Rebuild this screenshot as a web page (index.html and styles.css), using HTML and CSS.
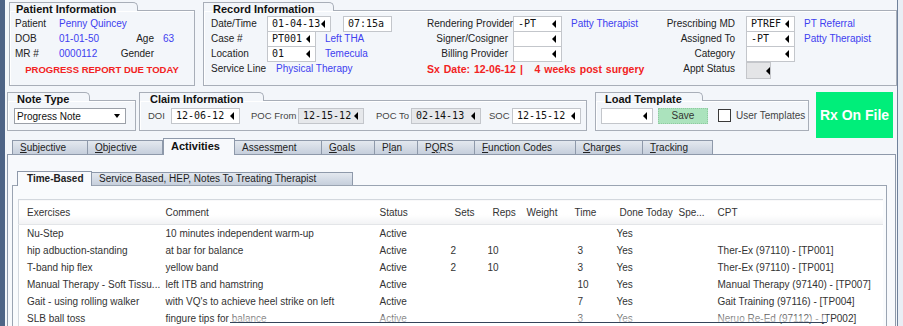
FILE: index.html
```html
<!DOCTYPE html>
<html lang="en">
<head>
  <meta charset="UTF-8" />
  <meta name="viewport" content="width=device-width, initial-scale=1.0"/>
  <title>Daily Note - Activities</title>
  <link rel="stylesheet" href="styles.css">
</head>
<body>
  <div class="window">
    <div class="edge-left"></div>
    <div class="main">

      <div class="row-top">
        <section class="group patient">
          <div class="group-tab">Patient Information</div>
          <div class="group-body patient-body">
            <span>Patient</span><span class="link wide">Penny Quincey</span>
            <span>DOB</span><span class="link">01-01-50</span><span class="rlbl">Age</span><span class="link val">63</span>
            <span>MR #</span><span class="link">0000112</span><span class="rlbl">Gender</span><span class="val"></span>
            <div class="alert">PROGRESS REPORT DUE TODAY</div>
          </div>
        </section>

        <section class="group record">
          <div class="group-tab">Record Information</div>
          <div class="group-body record-body">
            <div class="rec-col rec-left">
              <div class="rec-row">
                <span class="lbl">Date/Time</span>
                <span class="field w64">01-04-13<i class="tri"></i></span>
                <span class="field w49 time">07:15a</span>
              </div>
              <div class="rec-row">
                <span class="lbl">Case #</span>
                <span class="field w49">PT001<i class="tri"></i></span>
                <span class="link">Left THA</span>
              </div>
              <div class="rec-row">
                <span class="lbl">Location</span>
                <span class="field w49">01<i class="tri"></i></span>
                <span class="link">Temecula</span>
              </div>
              <div class="rec-row">
                <span class="lbl">Service Line</span>
                <span class="link">Physical Therapy</span>
              </div>
            </div>

            <div class="rec-col rec-mid">
              <div class="rec-row">
                <span class="lbl">Rendering Provider</span>
                <span class="field w49">-PT<i class="tri"></i></span>
                <span class="link">Patty Therapist</span>
              </div>
              <div class="rec-row">
                <span class="lbl">Signer/Cosigner</span>
                <span class="field w49"><i class="tri"></i></span>
              </div>
              <div class="rec-row">
                <span class="lbl">Billing Provider</span>
                <span class="field w49"><i class="tri"></i></span>
              </div>
              <div class="rec-row">
                <span class="sx">Sx Date: 12-06-12 |&nbsp;&nbsp; 4 weeks post surgery</span>
              </div>
            </div>

            <div class="rec-col rec-right">
              <div class="rec-row">
                <span class="lbl">Prescribing MD</span>
                <span class="field w49">PTREF<i class="tri"></i></span>
                <span class="link">PT Referral</span>
              </div>
              <div class="rec-row">
                <span class="lbl">Assigned To</span>
                <span class="field w49">-PT<i class="tri"></i></span>
                <span class="link">Patty Therapist</span>
              </div>
              <div class="rec-row">
                <span class="lbl">Category</span>
                <span class="field w49"><i class="tri"></i></span>
              </div>
              <div class="rec-row">
                <span class="lbl">Appt Status</span>
                <span class="field status-btn"><i class="tri"></i></span>
              </div>
            </div>
          </div>
        </section>
      </div>

      <div class="row-mid">
        <section class="group note">
          <div class="group-tab">Note Type</div>
          <div class="group-body note-body">
            <span class="select">Progress Note<i class="tri-down"></i></span>
          </div>
        </section>

        <section class="group claim">
          <div class="group-tab">Claim Information</div>
          <div class="group-body claim-body">
            <span class="clbl doi">DOI</span>
            <span class="field w69">12-06-12<i class="tri"></i></span>
            <span class="clbl from">POC From</span>
            <span class="field w66 off">12-15-12<i class="tri"></i></span>
            <span class="clbl to">POC To</span>
            <span class="field w70 off">02-14-13<i class="tri"></i></span>
            <span class="clbl soc">SOC</span>
            <span class="field w69">12-15-12<i class="tri"></i></span>
          </div>
        </section>

        <section class="group load">
          <div class="group-tab">Load Template</div>
          <div class="group-body load-body">
            <span class="field w52"><i class="tri"></i></span>
            <button class="save">Save</button>
            <span class="check"></span>
            <span class="check-lbl">User Templates</span>
          </div>
        </section>

        <div class="rx">Rx On File</div>
      </div>

      <div class="tabs">
        <span class="tab"><u>S</u>ubjective</span>
        <span class="tab"><u>O</u>bjective</span>
        <span class="tab active">Activities</span>
        <span class="tab">Assess<u>m</u>ent</span>
        <span class="tab"><u>G</u>oals</span>
        <span class="tab">P<u>l</u>an</span>
        <span class="tab">P<u>Q</u>RS</span>
        <span class="tab"><u>F</u>unction Codes</span>
        <span class="tab"><u>C</u>harges</span>
        <span class="tab"><u>T</u>racking</span>
      </div>

      <div class="tab-panel">
        <div class="subtabs">
          <span class="subtab active">Time-Based</span>
          <span class="subtab">Service Based, HEP, Notes To Treating Therapist</span>
        </div>
        <div class="subpanel">
          <table class="grid">
            <colgroup>
              <col class="c-ex"><col class="c-com"><col class="c-st"><col class="c-sets"><col class="c-reps">
              <col class="c-wt"><col class="c-time"><col class="c-done"><col class="c-spe"><col>
            </colgroup>
            <thead>
              <tr>
                <th>Exercises</th><th>Comment</th><th>Status</th><th>Sets</th><th>Reps</th>
                <th>Weight</th><th>Time</th><th>Done Today</th><th>Spe...</th><th>CPT</th>
              </tr>
            </thead>
            <tbody>
              <tr><td>Nu-Step</td><td>10 minutes independent warm-up</td><td>Active</td><td></td><td></td><td></td><td></td><td>Yes</td><td></td><td></td></tr>
              <tr><td>hip adbuction-standing</td><td>at bar for balance</td><td>Active</td><td>2</td><td>10</td><td></td><td>3</td><td>Yes</td><td></td><td>Ther-Ex (97110) - [TP001]</td></tr>
              <tr><td>T-band hip flex</td><td>yellow band</td><td>Active</td><td>2</td><td>10</td><td></td><td>3</td><td>Yes</td><td></td><td>Ther-Ex (97110) - [TP001]</td></tr>
              <tr><td>Manual Therapy - Soft Tissu...</td><td>left ITB and hamstring</td><td>Active</td><td></td><td></td><td></td><td>10</td><td>Yes</td><td></td><td>Manual Therapy (97140) - [TP007]</td></tr>
              <tr><td>Gait - using rolling walker</td><td>with VQ's to achieve heel strike on left</td><td>Active</td><td></td><td></td><td></td><td>7</td><td>Yes</td><td></td><td>Gait Training (97116) - [TP004]</td></tr>
              <tr><td>SLB ball toss</td><td>fingure tips for balance</td><td>Active</td><td></td><td></td><td></td><td>3</td><td>Yes</td><td></td><td>Neruo Re-Ed (97112) - [TP002]</td></tr>
            </tbody>
          </table>
        </div>
      </div>

      <div class="curl"></div>
    </div>
    <div class="edge-right"></div>
  </div>
</body>
</html>
```

FILE: styles.css
```css
* {
  box-sizing: border-box;
}

body {
  margin: 0;
  background: #f3f6fa;
  font-family: "Liberation Sans", Arial, sans-serif;
  font-size: 10px;
  color: #222;
  overflow: hidden;
}

.window {
  display: flex;
  height: 326px;
}

.edge-left {
  width: 5px;
  background: #4e6486;
}

.edge-right {
  width: 6px;
  border-left: 1px solid #6f819b;
  background: #e9eef5;
}

.main {
  flex: 1;
  padding: 2px 0 0 2px;
  position: relative;
  overflow: hidden;
}

.link {
  color: #4040f0;
}

/* group boxes */
.group {
  display: flex;
  flex-direction: column;
}

.group-tab {
  align-self: flex-start;
  height: 9px;
  padding-left: 6px;
  margin-bottom: -1px;
  border: 1px solid #a8aeb8;
  border-bottom: none;
  border-radius: 0 5px 0 0;
  background: #f3f6fa;
  position: relative;
  z-index: 1;
  font-size: 11px;
  font-weight: bold;
  line-height: 12px;
  color: #111;
  white-space: nowrap;
}

.group-body {
  flex: 1;
  border: 1px solid #a8aeb8;
  box-shadow: inset 1px 1px 0 #fff;
}

.row-top {
  display: flex;
  gap: 8px;
  height: 84px;
  margin-left: 2px;
}

.patient {
  width: 186px;
}

.patient .group-tab {
  width: 129px;
}

.record {
  width: 694px;
}

.record .group-tab {
  width: 131px;
  padding-left: 9px;
}

.patient-body {
  display: grid;
  grid-template-columns: 44px 60px 35px 1fr;
  grid-auto-rows: 15px;
  align-items: center;
  padding: 5px 0 0 5px;
}

.patient-body .wide {
  grid-column: 2 / -1;
}

.patient-body .rlbl {
  text-align: right;
}

.patient-body .val {
  padding-left: 9px;
}

.alert {
  grid-column: 1 / -1;
  margin: 2px 0 0 -5px;
  text-align: center;
  font-size: 9.5px;
  font-weight: bold;
  color: #f22222;
}

/* record information */
.record-body {
  display: flex;
  padding: 5px 0 0 7px;
}

.rec-row {
  display: flex;
  align-items: flex-start;
  height: 15px;
  line-height: 15px;
  white-space: nowrap;
}

.rec-left {
  width: 216px;
}

.rec-left .lbl {
  width: 56px;
}

.rec-mid {
  width: 229px;
}

.rec-mid .lbl {
  width: 81px;
  margin-right: 5px;
  text-align: right;
}

.rec-right .lbl {
  width: 79px;
  margin-right: 11px;
  text-align: right;
}

.rec-row .link {
  margin-left: 9px;
}

.rec-row .time {
  margin-left: 12px;
}

.sx {
  font-size: 10.5px;
  font-weight: bold;
  word-spacing: 1px;
  color: #f22222;
  line-height: 17px;
}

.field {
  display: inline-flex;
  align-items: center;
  justify-content: space-between;
  height: 16px;
  padding: 0 5px 0 4px;
  border: 1px solid #c3c6cb;
  background: #fff;
  font-family: "DejaVu Sans Mono", "Liberation Mono", monospace;
  font-size: 10px;
  line-height: 14px;
  color: #111;
}

.field .tri {
  margin-left: auto;
}

.tri {
  display: inline-block;
  width: 0;
  height: 0;
  border-top: 4px solid transparent;
  border-bottom: 4px solid transparent;
  border-right: 4px solid #000;
}

.tri-down {
  display: inline-block;
  width: 0;
  height: 0;
  border-left: 3px solid transparent;
  border-right: 3px solid transparent;
  border-top: 4px solid #000;
}

.w49 { width: 49px; }
.w52 { width: 52px; }
.w64 { width: 64px; }
.w66 { width: 66px; }
.w69 { width: 69px; }
.w70 { width: 70px; }

.field.off {
  background: #e6e8eb;
}

.status-btn {
  width: 25px;
  height: 17px;
  margin-top: 1px;
  justify-content: center;
  padding: 0 0 0 4px;
  background: #e4e5e7;
  border-color: #c4c6ca;
}

/* second row */
.row-mid {
  display: flex;
  align-items: flex-start;
  margin-top: 6px;
  height: 46px;
}

.row-mid .group {
  height: 39px;
}

.note {
  width: 129px;
}

.note .group-tab {
  width: 83px;
  padding-left: 9px;
}

.claim {
  width: 448px;
  margin-left: 3px;
}

.claim .group-tab {
  width: 125px;
  padding-left: 10px;
}

.load {
  width: 214px;
  margin-left: 8px;
}

.load .group-tab {
  width: 108px;
  padding-left: 9px;
}

.note-body {
  padding: 7px 0 0 6px;
}

.select {
  display: flex;
  align-items: center;
  justify-content: space-between;
  width: 112px;
  height: 16px;
  padding: 0 5px 0 2px;
  border: 1px solid #9ba0a8;
  background: #fff;
  color: #111;
}

.claim-body {
  display: flex;
  align-items: center;
  height: 31px;
  padding: 1px 0 0 8px;
}

.clbl {
  color: #444;
  font-size: 9.5px;
  white-space: nowrap;
  margin-top: -2px;
}

.doi { width: 23px; }
.from { width: 47px; margin-left: 11px; }
.to { width: 35px; margin-left: 12px; }
.soc { width: 23px; margin-left: 8px; }

.load-body {
  display: flex;
  align-items: center;
  height: 31px;
  padding: 0 0 0 5px;
}

.save {
  width: 50px;
  height: 16px;
  margin-left: 5px;
  padding: 0;
  border: 1px dotted #8fc9a0;
  background: #abe3bd;
  font-family: inherit;
  font-size: 10px;
  color: #333;
}

.check {
  width: 13px;
  height: 13px;
  margin-left: 10px;
  border: 1px solid #3a3a3a;
  background: #fff;
}

.check-lbl {
  margin-left: 5px;
  color: #444;
}

.rx {
  display: flex;
  align-items: center;
  justify-content: center;
  width: 77px;
  height: 46px;
  margin-left: 7px;
  background: #00ee7a;
  color: #fff;
  font-size: 14px;
  font-weight: bold;
}

/* tabs */
.tabs {
  display: grid;
  grid-template-columns: 76px 75px 72px 87px 53px 43px 57px 101px 67px 70px;
  align-items: end;
  height: 16px;
  margin-left: 5px;
}

.tab {
  height: 14px;
  padding-left: 7px;
  border: 1px solid #8e99aa;
  border-bottom: none;
  border-left: none;
  background: linear-gradient(#e3e8ef, #c6cfdc);
  line-height: 13px;
  color: #222;
}

.tab:first-child {
  border-left: 1px solid #8e99aa;
}

.tab u {
  text-decoration-thickness: 1px;
}

.tab.active {
  height: 17px;
  margin-bottom: -1px;
  border-left: 1px solid #8e99aa;
  background: #f7f9fc;
  position: relative;
  z-index: 1;
  font-size: 11px;
  font-weight: bold;
  line-height: 15px;
  color: #111;
}

.tab-panel {
  height: 200px;
  margin: 0 1px 0 0;
  padding: 16px 8px 0 4px;
  border: 1px solid #8e99aa;
  background: #f7f9fc;
}

.subtabs {
  display: grid;
  grid-template-columns: 75px 261px;
  align-items: end;
  height: 14px;
  margin-left: 5px;
}

.subtab {
  height: 13px;
  padding-left: 7px;
  border: 1px solid #8e99aa;
  border-bottom: none;
  border-left: none;
  background: linear-gradient(#e3e8ef, #c6cfdc);
  line-height: 12px;
  color: #222;
}

.subtab.active {
  height: 15px;
  margin-bottom: -1px;
  border-left: 1px solid #8e99aa;
  background: #f9fbfd;
  position: relative;
  z-index: 1;
  font-weight: bold;
  line-height: 14px;
  padding-left: 9px;
}

.subpanel {
  height: 160px;
  padding: 13px 3px 0 5px;
  border: 1px solid #9aa4b2;
  background: #f9fbfd;
}

/* exercise grid */
.grid {
  width: 100%;
  table-layout: fixed;
  border-collapse: collapse;
  border-top: 1px solid #d3d8de;
  border-left: 1px solid #d3d8de;
  background: #fff;
}

.c-ex { width: 141px; }
.c-com { width: 213px; }
.c-st { width: 76px; }
.c-sets { width: 39px; }
.c-reps { width: 37px; }
.c-wt { width: 45px; }
.c-time { width: 45px; }
.c-done { width: 62px; }
.c-spe { width: 38px; }

.grid th {
  height: 25px;
  padding: 0 0 0 5px;
  background: linear-gradient(#fff 60%, #f1f2f4);
  border-bottom: 1px solid #e3e5e8;
  text-align: left;
  font-weight: normal;
  color: #333;
  white-space: nowrap;
  overflow: hidden;
}

.grid td {
  height: 17px;
  padding: 0 0 0 5px;
  color: #333;
  white-space: nowrap;
  overflow: hidden;
}

.grid th:nth-child(1), .grid td:nth-child(1) { padding-left: 8px; }
.grid th:nth-child(2), .grid td:nth-child(2) { padding-left: 6px; }
.grid th:nth-child(3), .grid td:nth-child(3) { padding-left: 7px; }
.grid th:nth-child(4) { padding-left: 6px; }
.grid td:nth-child(4) { padding-left: 2px; }
.grid th:nth-child(5) { padding-left: 5px; }
.grid td:nth-child(5) { padding-left: 0; }
.grid th:nth-child(6) { padding-left: 2px; }
.grid th:nth-child(7) { padding-left: 5px; }
.grid td:nth-child(7) { padding-left: 8px; }
.grid th:nth-child(8) { padding-left: 5px; }
.grid td:nth-child(8) { padding-left: 2px; }
.grid th:nth-child(9) { padding-left: 2px; }
.grid th:nth-child(10), .grid td:nth-child(10) { padding-left: 3px; }

/* white fold across the bottom of the grid */
.curl {
  position: absolute;
  left: 225px;
  right: 70px;
  top: 311px;
  height: 12px;
  background: linear-gradient(rgba(255, 255, 255, 0), rgba(255, 255, 255, 0.7));
  border-bottom: 1px solid #34445a;
}
```
